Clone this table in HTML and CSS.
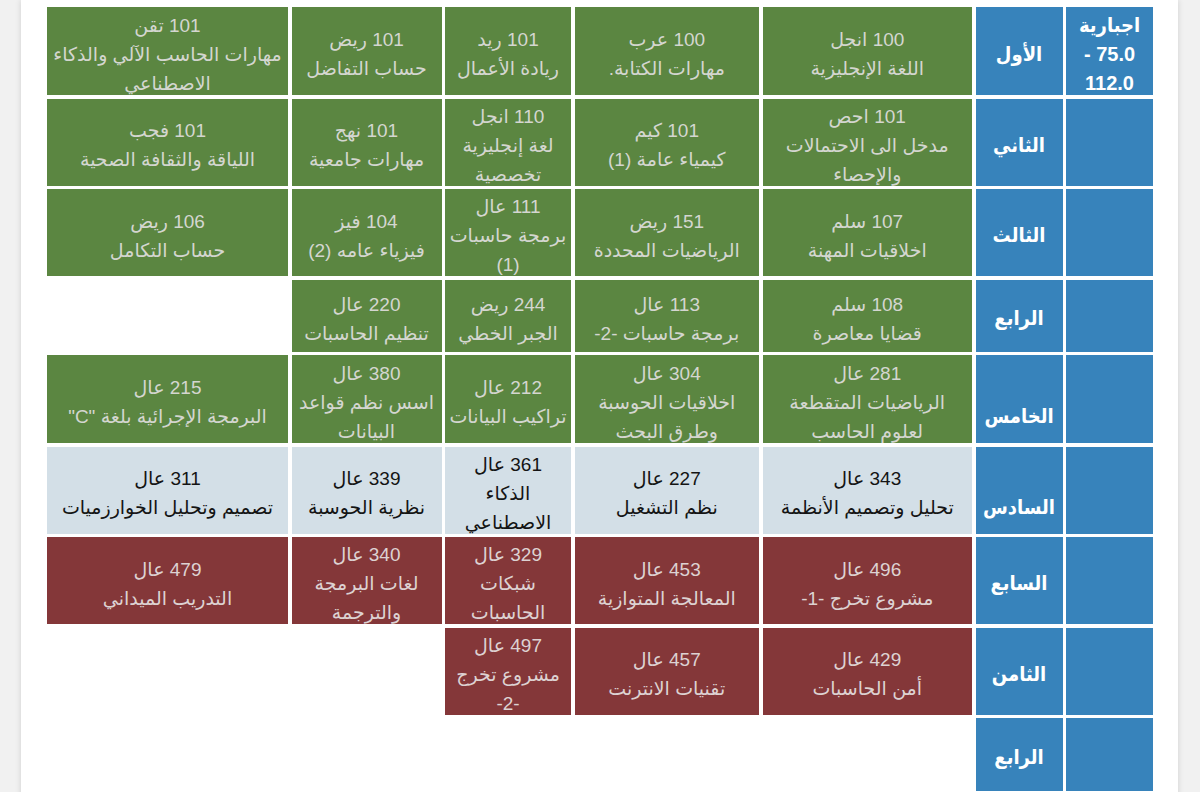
FILE: index.html
```html
<!DOCTYPE html>
<html lang="ar">
<head>
<meta charset="utf-8">
<title>الخطة الدراسية</title>
<link rel="stylesheet" href="styles.css">
</head>
<body>
<div class="card">
  <div class="plan" dir="rtl">
    <!-- row 1 -->
    <div class="cell blue req">اجبارية<br>75.0 -<br>112.0</div>
    <div class="cell blue label">الأول</div>
    <div class="cell green">100 انجل<br>اللغة الإنجليزية</div>
    <div class="cell green">100 عرب<br>مهارات الكتابة.</div>
    <div class="cell green">101 ريد<br>ريادة الأعمال</div>
    <div class="cell green">101 ريض<br>حساب التفاضل</div>
    <div class="cell green">101 تقن<br>مهارات الحاسب الآلي والذكاء<br>الاصطناعي</div>
    <!-- row 2 -->
    <div class="cell blue"></div>
    <div class="cell blue label">الثاني</div>
    <div class="cell green">101 احص<br>مدخل الى الاحتمالات<br>والإحصاء</div>
    <div class="cell green">101 كيم<br>كيمياء عامة (1)</div>
    <div class="cell green">110 انجل<br>لغة إنجليزية<br>تخصصية</div>
    <div class="cell green">101 نهج<br>مهارات جامعية</div>
    <div class="cell green">101 فجب<br>اللياقة والثقافة الصحية</div>
    <!-- row 3 -->
    <div class="cell blue"></div>
    <div class="cell blue label">الثالث</div>
    <div class="cell green">107 سلم<br>اخلاقيات المهنة</div>
    <div class="cell green">151 ريض<br>الرياضيات المحددة</div>
    <div class="cell green">111 عال<br>برمجة حاسبات<br>(1)</div>
    <div class="cell green">104 فيز<br>فيزياء عامه (2)</div>
    <div class="cell green">106 ريض<br>حساب التكامل</div>
    <!-- row 4 -->
    <div class="cell blue"></div>
    <div class="cell blue label">الرابع</div>
    <div class="cell green">108 سلم<br>قضايا معاصرة</div>
    <div class="cell green">113 عال<br>برمجة حاسبات -2-</div>
    <div class="cell green">244 ريض<br>الجبر الخطي</div>
    <div class="cell green">220 عال<br>تنظيم الحاسبات</div>
    <div class="cell empty"></div>
    <!-- row 5 -->
    <div class="cell blue"></div>
    <div class="cell blue label low">الخامس</div>
    <div class="cell green">281 عال<br>الرياضيات المتقطعة<br>لعلوم الحاسب</div>
    <div class="cell green">304 عال<br>اخلاقيات الحوسبة<br>وطرق البحث</div>
    <div class="cell green">212 عال<br>تراكيب البيانات</div>
    <div class="cell green">380 عال<br>اسس نظم قواعد<br>البيانات</div>
    <div class="cell green">215 عال<br>البرمجة الإجرائية بلغة "C"</div>
    <!-- row 6 -->
    <div class="cell blue"></div>
    <div class="cell blue label low">السادس</div>
    <div class="cell light">343 عال<br>تحليل وتصميم الأنظمة</div>
    <div class="cell light">227 عال<br>نظم التشغيل</div>
    <div class="cell light">361 عال<br>الذكاء<br>الاصطناعي</div>
    <div class="cell light">339 عال<br>نظرية الحوسبة</div>
    <div class="cell light">311 عال<br>تصميم وتحليل الخوارزميات</div>
    <!-- row 7 -->
    <div class="cell blue"></div>
    <div class="cell blue label">السابع</div>
    <div class="cell red">496 عال<br>مشروع تخرج -1-</div>
    <div class="cell red">453 عال<br>المعالجة المتوازية</div>
    <div class="cell red">329 عال<br>شبكات<br>الحاسبات</div>
    <div class="cell red">340 عال<br>لغات البرمجة<br>والترجمة</div>
    <div class="cell red">479 عال<br>التدريب الميداني</div>
    <!-- row 8 -->
    <div class="cell blue"></div>
    <div class="cell blue label">الثامن</div>
    <div class="cell red">429 عال<br>أمن الحاسبات</div>
    <div class="cell red">457 عال<br>تقنيات الانترنت</div>
    <div class="cell red">497 عال<br>مشروع تخرج<br>-2-</div>
    <div class="cell empty"></div>
    <div class="cell empty"></div>
    <!-- row 9 -->
    <div class="cell blue"></div>
    <div class="cell blue label">الرابع</div>
  </div>
</div>
</body>
</html>
```

FILE: styles.css
```css
html, body {
  margin: 0;
  padding: 0;
}

body {
  background: #f1f1f1;
  overflow: hidden;
  font-family: "Liberation Sans", "DejaVu Sans", sans-serif;
}

.card {
  margin: 0 22px 0 21px;
  background: #ffffff;
  box-shadow: 0 0 6px rgba(0, 0, 0, 0.14);
  padding: 7px 25px 0 26px;
  min-height: 820px;
}

.plan {
  direction: rtl;
  display: grid;
  grid-template-columns: 87px 87px 209.5px 184.5px 126px 150px 241px;
  grid-template-rows: 88px 87px 87px 72px 88px 87px 87px 87px 73px;
  column-gap: 3.5px;
  row-gap: 3.5px;
}

.cell {
  display: flex;
  flex-direction: column;
  justify-content: center;
  align-items: center;
  text-align: center;
  font-size: 19px;
  line-height: 29px;
  padding-top: 6px;
  box-sizing: border-box;
  white-space: nowrap;
  overflow: visible;
}

.blue {
  background: #3783bb;
  color: #ffffff;
  font-family: "Liberation Sans", "DejaVu Sans Condensed", "DejaVu Sans", sans-serif;
  font-stretch: condensed;
  font-size: 20px;
  font-weight: bold;
}

.label.low {
  padding-top: 34px;
}

.green {
  background: #5b8641;
  color: #d4d6d0;
}

.light {
  background: #d3dfe7;
  color: #141414;
}

.red {
  background: #843739;
  color: #ddd2d2;
}

.empty {
  background: transparent;
}
```
